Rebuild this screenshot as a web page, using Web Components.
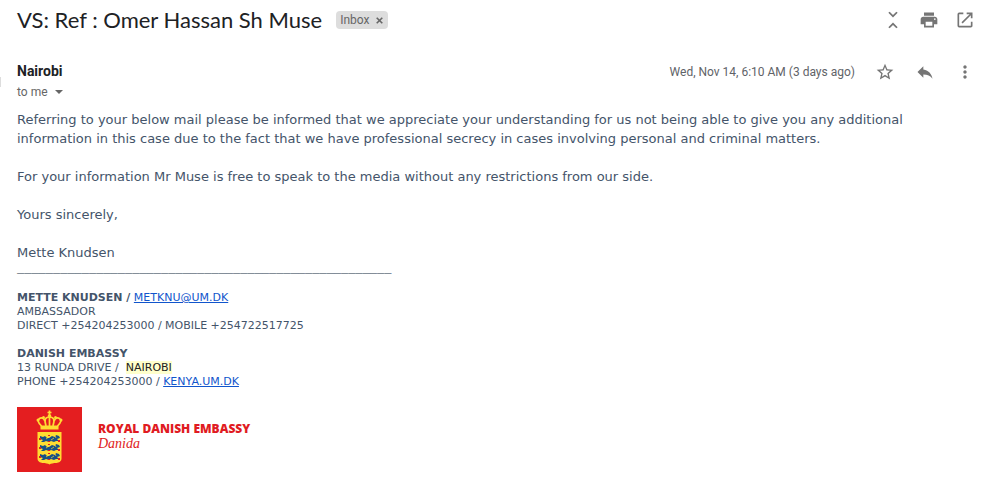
<!DOCTYPE html>
<html lang="en">
<head>
<meta charset="utf-8">
<title>VS: Ref : Omer Hassan Sh Muse</title>
<style>
body{margin:0;background:#fff;font-family:Roboto,"Liberation Sans",sans-serif}
</style>
</head>
<body>
<mail-message>
  <mail-subject slot="subject" label="Inbox">VS: Ref : Omer Hassan Sh Muse</mail-subject>
  <mail-sender slot="sender" date="Wed, Nov 14, 6:10 AM (3 days ago)" to="to me">Nairobi</mail-sender>
  <mail-letter>
    <p>Referring to your below mail please be informed that we appreciate your understanding for us not being able to give you any additional information in this case due to the fact that we have professional secrecy in cases involving personal and criminal matters.</p>
    <p>For your information Mr Muse is free to speak to the media without any restrictions from our side.</p>
    <p>Yours sincerely,</p>
    <p>Mette Knudsen</p>
  </mail-letter>
  <mail-signature></mail-signature>
  <embassy-logo></embassy-logo>
</mail-message>
<script>
const ICONS = {
  collapse: '<path d="M6.4 20.600 8 22l4-4 4 4 1.600-1.400L12 15l-5.600 5.600zM17.600 3.400 16 2l-4 4-4-4-1.600 1.400L12 9l5.600-5.600z"/>',
  print: '<path d="M19 8H5c-1.66 0-3 1.34-3 3v6h4v4h12v-4h4v-6c0-1.66-1.34-3-3-3zm-3 11H8v-5h8v5zm3-7c-.55 0-1-.45-1-1s.45-1 1-1 1 .45 1 1-.45 1-1 1zm-1-9H6v4h12V3z"/>',
  open: '<path d="M19 19H5V5h5V3H5a2 2 0 0 0-2 2v14a2 2 0 0 0 2 2h14c1.1 0 2-.9 2-2v-5h-2v5zM14 3v2h3.59l-9.83 9.83 1.41 1.41L19 6.41V10h2V3h-7z"/>',
  star: '<path d="M22 9.24l-7.19-.62L12 2 9.19 8.63 2 9.24l5.46 4.73L5.82 21 12 17.27 18.18 21l-1.63-7.03L22 9.24zM12 15.4l-3.76 2.27 1-4.28-3.32-2.88 4.38-.38L12 6.1l1.71 4.04 4.38.38-3.32 2.88 1 4.28L12 15.4z"/>',
  reply: '<path d="M10 9V5l-7 7 7 7v-4.1c5 0 8.5 1.6 11 5.1-1-5-4-10-11-11z"/>',
  more: '<path d="M12 8c1.1 0 2-.9 2-2s-.9-2-2-2-2 .9-2 2 .9 2 2 2zm0 2c-1.1 0-2 .9-2 2s.9 2 2 2 2-.9 2-2-.9-2-2-2zm0 6c-1.1 0-2 .9-2 2s.9 2 2 2 2-.9 2-2-.9-2-2-2z"/>'
};
const define = (name, render) => customElements.define(name, class extends HTMLElement {
  constructor() {
    super();
    this.attachShadow({ mode: 'open' });
  }
  connectedCallback() {
    this.shadowRoot.innerHTML = render(this);
  }
});

define('icon-button', el => `<style>
:host{display:block;width:20px;height:20px}
button{display:block;width:100%;height:100%;padding:0;border:0;background:none;cursor:pointer}
svg{display:block;width:100%;height:100%;fill:#757575}
</style><button type="button" aria-label="${el.getAttribute('label')}"><svg viewBox="0 0 24 24" aria-hidden="true">${ICONS[el.getAttribute('icon')]}</svg></button>`);

define('mail-subject', el => `<style>
:host{display:flex;align-items:center;justify-content:space-between;height:40px;padding:0 10px 0 17px}
.title{display:flex;align-items:center;gap:14px}
h1{margin:0;font:400 22px/28px Lato,sans-serif;color:#202124}
.chip{display:flex;align-items:center;gap:7px;height:18px;padding:0 5px 0 4px;border-radius:4px;background:#ddd;color:#666;font-size:12px}
.chip button{display:block;width:7px;height:7px;padding:0;border:0;background:none}
svg{display:block;width:7px;height:7px;fill:none;stroke:#666;stroke-width:1.6}
.tools{display:flex;gap:16px}
</style><div class="title"><h1><slot></slot></h1><div class="chip"><span>${el.getAttribute('label')}</span><button type="button" aria-label="Remove label"><svg viewBox="0 0 7 7"><path d="M.7.7l5.6 5.6M6.3.7.7 6.3"/></svg></button></div></div>
<div class="tools"><icon-button icon="collapse" label="Collapse all"></icon-button><icon-button icon="print" label="Print all"></icon-button><icon-button icon="open" label="In new window"></icon-button></div>`);

define('mail-sender', el => `<style>
:host{display:flex;align-items:flex-start;padding:21px 10px 0 0}
.avatar{width:1px;height:10px;margin:16px 16px 0 0;background:#ddd}
.who{flex:1}
h2{margin:0;font-size:14px;font-weight:700;line-height:20px;color:#202124}
.to{display:flex;align-items:center;gap:7px;padding:0;border:0;background:none;font:12px/22px Roboto,sans-serif;color:#666}
.to svg{width:8px;height:4px;fill:#666}
.meta{display:flex;align-items:center;height:22px;gap:20px}
time{font-size:12px;color:#5f6368}
</style><div class="avatar"></div><div class="who"><h2><slot></slot></h2><button class="to" type="button">${el.getAttribute('to')}<svg viewBox="0 0 8 4"><path d="M0 0h8L4 4z"/></svg></button></div>
<div class="meta"><time>${el.getAttribute('date')}</time><icon-button icon="star" label="Star"></icon-button><icon-button icon="reply" label="Reply"></icon-button><icon-button icon="more" label="More"></icon-button></div>`);

define('mail-letter', () => `<style>
:host{display:block;padding:0 40px 0 17px;font:13px/19px Verdana,"DejaVu Sans",sans-serif;color:#44546a}
::slotted(p){margin:0 0 19px}
::slotted(p:last-child){margin:0}
</style><slot></slot>`);

define('mail-signature', () => `<style>
:host{display:block;padding:0 17px;font:11px/14px Verdana,"DejaVu Sans",sans-serif;color:#44546a}
.rule{font:bold 12px/15px "Liberation Mono",monospace;margin-bottom:14px}
p{margin:0 0 14px}
a{color:#15c}
mark{background:#ffc;color:#222}
</style><div class="rule">____________________________________________________</div>
<p><b>METTE KNUDSEN /</b> <a href="mailto:METKNU@UM.DK">METKNU@UM.DK</a><br>AMBASSADOR<br>DIRECT +254204253000 / MOBILE +254722517725</p>
<p><b>DANISH EMBASSY</b><br>13 RUNDA DRIVE /&nbsp; <mark>NAIROBI</mark><br>PHONE +254204253000 / <a href="http://kenya.um.dk">KENYA.UM.DK</a></p>`);

define('embassy-logo', () => {
  const lion = y => `<g transform="translate(23 ${y})"><path fill="#174f86" d="M0 1l3 1 2-1 2 2 2 0 3-2 3 1 1-2 3 1 1 2-3 1 2 2-3 0-2 1-3-1-2 1-3-1-2 1-3 0 2-2-3-1z"/><path stroke="#ffdc32" stroke-width=".7" fill="none" d="M6 4l3-2M11 5l3-2M15 1l1 2"/><path fill="#e41e20" d="M-1 3h2v2h-2zM8 0h2v1h-2zM18 5h2v2h-2zM8 6h2v1h-2z"/></g>`;
  return `<style>
:host{display:flex;align-items:flex-start;gap:16px;padding:4px 17px 0;color:#e01b22}
svg{display:block;width:65px;height:65px}
.name{padding-top:14px}
strong,em{display:block}
strong{font:900 12px/15px "Open Sans",sans-serif}
em{font:italic 14px/15px "Liberation Serif",serif}
</style><svg viewBox="0 0 65 65" role="img" aria-label="Coat of arms"><path fill="#e41e20" d="M0 0h65v65H0z"/>
<g fill="none" stroke="#ffdc32" stroke-width="1.7"><path d="M24.500 19c-4-4-4-6-2-7.500 3-2 6 1 6.500 7M40.500 19c4-4 4-6 2-7.500-3-2-6 1-6.500 7M32.500 19V9M29 19c-2-6-1-9 3.500-9s5.500 3 3.500 9"/><path d="M32.500 3.500v6M30.500 5.500h4"/></g>
<g fill="#ffdc32"><circle cx="32.500" cy="9" r="1.800"/><circle cx="21" cy="13" r="1.500"/><circle cx="44" cy="13" r="1.500"/><circle cx="26.500" cy="10.500" r="1.500"/><circle cx="38.500" cy="10.500" r="1.500"/><path d="M23.500 18.500h18v4h-18zM20.500 25h24v26.500c0 3-2.500 4-5 4.500-3 0-5.500.500-7 1.500-1.500-1-4-1.500-7-1.500-2.500-.5-5-1.500-5-4.500z"/></g>
${lion(28)}${lion(37)}${lion(46)}</svg><div class="name"><strong>ROYAL DANISH EMBASSY</strong><em>Danida</em></div>`;
});

define('mail-message', () => `<style>
:host{display:block}
main{display:block;padding-top:7px}
</style><slot name="subject"></slot><slot name="sender"></slot><main><slot></slot></main>`);
</script>
</body>
</html>
